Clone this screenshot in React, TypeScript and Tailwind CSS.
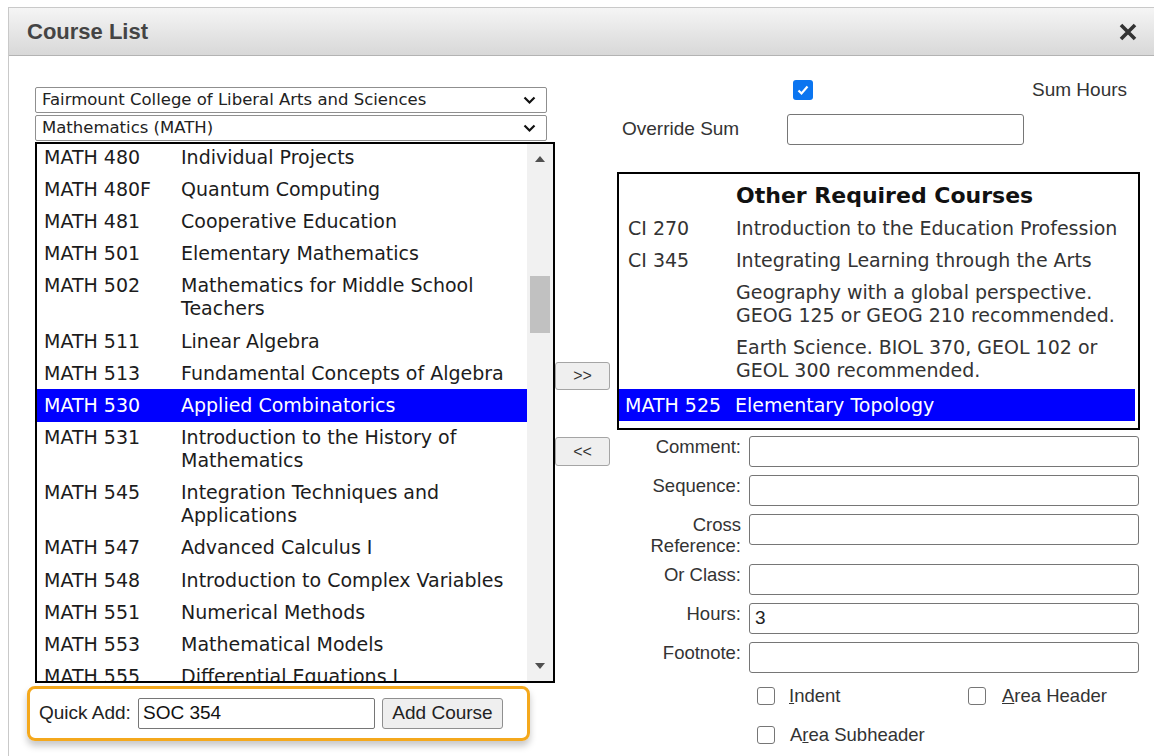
import { useState } from "react";

type Course = { code: string; title: string };

const catalog: Course[] = [
  { code: "MATH 480", title: "Individual Projects" },
  { code: "MATH 480F", title: "Quantum Computing" },
  { code: "MATH 481", title: "Cooperative Education" },
  { code: "MATH 501", title: "Elementary Mathematics" },
  { code: "MATH 502", title: "Mathematics for Middle School Teachers" },
  { code: "MATH 511", title: "Linear Algebra" },
  { code: "MATH 513", title: "Fundamental Concepts of Algebra" },
  { code: "MATH 530", title: "Applied Combinatorics" },
  { code: "MATH 531", title: "Introduction to the History of Mathematics" },
  { code: "MATH 545", title: "Integration Techniques and Applications" },
  { code: "MATH 547", title: "Advanced Calculus I" },
  { code: "MATH 548", title: "Introduction to Complex Variables" },
  { code: "MATH 551", title: "Numerical Methods" },
  { code: "MATH 553", title: "Mathematical Models" },
  { code: "MATH 555", title: "Differential Equations I" },
];

const required: Course[] = [
  { code: "CI 270", title: "Introduction to the Education Profession" },
  { code: "CI 345", title: "Integrating Learning through the Arts" },
  { code: "", title: "Geography with a global perspective. GEOG 125 or GEOG 210 recommended." },
  { code: "", title: "Earth Science. BIOL 370, GEOL 102 or GEOL 300 recommended." },
  { code: "MATH 525", title: "Elementary Topology" },
];

const fields = [
  { label: "Comment:", value: "" },
  { label: "Sequence:", value: "" },
  { label: "Cross Reference:", value: "" },
  { label: "Or Class:", value: "" },
  { label: "Hours:", value: "3" },
  { label: "Footnote:", value: "" },
];

function SelectBox({ value }: { value: string }) {
  return (
    <div className="flex h-[26px] w-[512px] items-center justify-between rounded-[2px] border border-[#8f8f8f] bg-white pl-[6px] pr-[10px] font-['DejaVu_Sans',Verdana,sans-serif] text-[16.5px] text-[#222]">
      <span>{value}</span>
      <svg width="13" height="9" viewBox="0 0 13 9" aria-hidden>
        <path d="M1.5 1.5l5 5 5-5" fill="none" stroke="#111" strokeWidth="2.2" />
      </svg>
    </div>
  );
}

function Checkbox({ checked = false }: { checked?: boolean }) {
  if (checked) {
    return (
      <span className="flex h-[20px] w-[20px] items-center justify-center rounded-[3px] bg-[#0b75f0]">
        <svg width="14" height="14" viewBox="0 0 14 14" aria-hidden>
          <path d="M2.5 7.5l3 3 6-7" fill="none" stroke="#fff" strokeWidth="2.2" />
        </svg>
      </span>
    );
  }
  return <span className="block h-[18px] w-[18px] rounded-[3px] border border-[#767676] bg-white" />;
}

function Scrollbar() {
  return (
    <div className="flex w-[26px] flex-col items-center bg-[#f1f1f1]">
      <svg className="mt-[12px]" width="10" height="6" viewBox="0 0 10 6" aria-hidden>
        <path d="M0 6L5 0l5 6z" fill="#505050" />
      </svg>
      <div className="mt-[114px] h-[57px] w-[20px] bg-[#c1c1c1]" />
      <div className="flex-1" />
      <svg className="mb-[12px]" width="10" height="6" viewBox="0 0 10 6" aria-hidden>
        <path d="M0 0h10L5 6z" fill="#505050" />
      </svg>
    </div>
  );
}

export default function App() {
  const [picked, setPicked] = useState("MATH 530");

  return (
    <div className="h-[756px] w-[1154px] overflow-hidden bg-white font-['Liberation_Sans',Arial,sans-serif]">
      <div className="h-[7px]" />
      <div className="ml-[8px] h-[749px] border-l border-t border-[#c9c9c9]">
        {/* dialog title bar */}
        <div className="flex h-[48px] items-center justify-between border-b border-[#b3b3b3] bg-linear-to-b from-[#f5f5f5] to-[#d8d8d8] pl-[18px] pr-[16px]">
          <span className="text-[22px] font-bold text-[#444]">Course List</span>
          <svg width="20" height="18" viewBox="0 0 20 18" aria-hidden>
            <path d="M3 2l14 14M17 2L3 16" stroke="#333" strokeWidth="3.6" />
          </svg>
        </div>

        <div className="flex items-start pl-[26px]">
          {/* catalog column */}
          <div className="w-[520px] pt-[31px]">
            <SelectBox value="Fairmount College of Liberal Arts and Sciences" />
            <div className="mt-[2px]">
              <SelectBox value="Mathematics (MATH)" />
            </div>
            <div className="mt-[1px] flex h-[541px] border-2 border-black bg-white">
              <div className="flex-1 overflow-hidden">
                <div className="-mt-[3px] font-['DejaVu_Sans',Verdana,sans-serif] text-[19px] leading-[23px] text-[#1c1c1c]">
                  {catalog.map((c) => (
                    <div
                      key={c.code}
                      onClick={() => setPicked(c.code)}
                      className={
                        "grid grid-cols-[137px_1fr] py-[4.6px] pl-[7px] pr-[14px] " +
                        (picked === c.code ? "bg-[#0000ff] text-white" : "")
                      }
                    >
                      <span>{c.code}</span>
                      <span>{c.title}</span>
                    </div>
                  ))}
                </div>
              </div>
              <Scrollbar />
            </div>

            <div className="-ml-[8px] mt-[3px] flex h-[55px] w-[503px] items-center rounded-[8px] border-[3px] border-[#f4a81c] pl-[9px] shadow-[0_5px_7px_rgba(0,0,0,0.22)]">
              <span className="w-[99px] text-[19px] text-[#222]">Quick Add:</span>
              <div className="flex h-[31px] w-[237px] items-center rounded-[2px] border border-[#767676] pl-[4px] text-[19px] text-[#111]">
                SOC 354
              </div>
              <button className="ml-[7px] h-[31px] w-[121px] rounded-[3px] border border-[#8f8f8f] bg-[#efefef] text-[19px] text-[#222]">
                Add Course
              </button>
            </div>
          </div>

          {/* move buttons */}
          <div className="flex w-[55px] flex-col pt-[306px]">
            <button className="h-[28px] w-[55px] rounded-[3px] border border-[#a5a5a5] bg-[#efefef] text-[16px] text-[#333]">
              &gt;&gt;
            </button>
            <button className="mt-[47px] h-[29px] w-[55px] rounded-[3px] border border-[#a5a5a5] bg-[#efefef] text-[16px] text-[#333]">
              &lt;&lt;
            </button>
          </div>

          {/* plan column */}
          <div className="ml-[7px] w-[523px] pt-[24px] text-[#333]">
            <div className="grid grid-cols-[170px_245px_1fr] items-center gap-y-[14px]">
              <span />
              <span className="ml-[6px]">
                <Checkbox checked />
              </span>
              <span className="text-[19px] leading-[20px]">Sum Hours</span>
              <span className="pl-[5px] text-[19px]">Override Sum</span>
              <div className="h-[31px] w-[237px] rounded-[3px] border border-[#767676]" />
              <span />
            </div>

            <div className="mt-[27px] h-[258px] border-2 border-black font-['DejaVu_Sans',Verdana,sans-serif] text-[19px] leading-[23px]">
              <div className="grid grid-cols-[108px_1fr] pb-[2px] pl-[9px] pt-[8px]">
                <span />
                <span className="text-[22px] font-bold leading-[28px] text-[#111]">Other Required Courses</span>
              </div>
              {required.map((c, i) => {
                const last = i === required.length - 1;
                return (
                  <div
                    key={c.title}
                    className={
                      "grid py-[4.5px] pr-[10px] " +
                      (last
                        ? "mr-[3px] mt-[3px] grid-cols-[110px_1fr] bg-[#0000ff] pl-[6px] text-white"
                        : "grid-cols-[108px_1fr] pl-[9px]")
                    }
                  >
                    <span>{c.code}</span>
                    <span>{c.title}</span>
                  </div>
                );
              })}
            </div>

            <div className="mt-[6px] grid grid-cols-[124px_390px] gap-x-[8px] gap-y-[8px]">
              {fields.map((f) => (
                <div key={f.label} className="contents">
                  <span className="text-right text-[18.5px] leading-[21px]">
                    {f.label === "Cross Reference:" ? (
                      <>
                        Cross
                        <br />
                        Reference:
                      </>
                    ) : (
                      f.label
                    )}
                  </span>
                  <div className="flex h-[31px] items-center rounded-[3px] border border-[#767676] pl-[5px] text-[19px] text-[#222]">
                    {f.value}
                  </div>
                </div>
              ))}
            </div>

            <div className="ml-[140px] mt-[14px] grid grid-cols-[211px_1fr] gap-y-[21px] text-[18.5px] leading-[18px]">
              <label className="flex items-center gap-[14px]">
                <Checkbox />
                <span>
                  <u>I</u>ndent
                </span>
              </label>
              <label className="flex items-center gap-[16px]">
                <Checkbox />
                <span>
                  <u>A</u>rea Header
                </span>
              </label>
              <label className="flex items-center gap-[15px]">
                <Checkbox />
                <span>
                  A<u>r</u>ea Subheader
                </span>
              </label>
            </div>
          </div>
        </div>
      </div>
    </div>
  );
}
